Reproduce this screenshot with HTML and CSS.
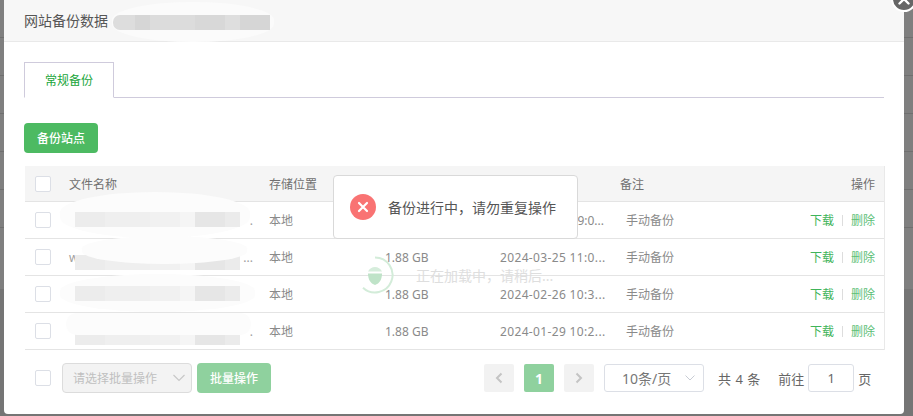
FILE: index.html
```html
<!DOCTYPE html>
<html lang="zh-CN">
<head>
<meta charset="utf-8">
<title>网站备份数据</title>
<link rel="stylesheet" href="styles.css">
</head>
<body>
<div class="dialog">
  <button class="close" aria-label="关闭"><svg width="14" height="14" viewBox="0 0 14 14"><path d="M2.5 2.5l9 9M11.5 2.5l-9 9" stroke="#fff" stroke-width="2.4" stroke-linecap="round"/></svg></button>
  <header class="head">
    <span>网站备份数据</span>
    <i class="smear smear-head"></i>
    <i class="mosaic mosaic-head"></i>
  </header>
  <main class="content">
    <div class="tabs"><div class="tab">常规备份</div></div>
    <button class="primary">备份站点</button>
    <section class="table">
      <div class="row row-head">
        <span class="check"></span><span>文件名称</span><span>存储位置</span><span></span><span></span><span>备注</span><span class="ops">操作</span>
      </div>
      <div class="row">
        <span class="check"></span><span class="name"><b>.</b><b>.</b></span><span>本地</span><span></span><span class="cut">9:0...</span><span class="note">手动备份</span><span class="ops"><a>下载</a><s></s><a class="del">删除</a></span>
      </div>
      <div class="row">
        <span class="check"></span><span class="name"><b>w</b><b>...</b></span><span>本地</span><span>1.88 GB</span><span class="date">2024-03-25 11:0...</span><span class="note">手动备份</span><span class="ops"><a>下载</a><s></s><a class="del">删除</a></span>
      </div>
      <div class="row">
        <span class="check"></span><span class="name"><b></b><b></b></span><span>本地</span><span>1.88 GB</span><span class="date">2024-02-26 10:3...</span><span class="note">手动备份</span><span class="ops"><a>下载</a><s></s><a class="del">删除</a></span>
      </div>
      <div class="row">
        <span class="check"></span><span class="name"><b></b><b>.</b></span><span>本地</span><span>1.88 GB</span><span class="date">2024-01-29 10:2...</span><span class="note">手动备份</span><span class="ops"><a>下载</a><s></s><a class="del">删除</a></span>
      </div>
      <i class="smear smear-1"></i><i class="mosaic mosaic-1"></i>
      <i class="mosaic mosaic-2"></i><i class="smear smear-2"></i>
      <i class="smear smear-3"></i><i class="mosaic mosaic-3"></i>
      <i class="mosaic mosaic-4"></i><i class="smear smear-4"></i>
      <div class="loading">
        <svg width="40" height="40" viewBox="0 0 40 40"><path d="M20 2.5A17.5 17.5 0 1 1 8 32.7" fill="none" stroke="#d3ecd9" stroke-width="2"/><path d="M13 18.5h14c0 6-2.500 10-7 11.500-4.500-1.500-7-5.500-7-11.500z" fill="#bfe3c8"/><path d="M13 16.500c1.500-3 4-4.500 7-4.500s5.500 1.500 7 4.500z" fill="#d6eddc"/></svg>
        <span>正在加载中，请稍后...</span>
      </div>
      <div class="toast">
        <svg width="26" height="26" viewBox="0 0 26 26"><circle cx="13" cy="13" r="13" fill="#f97373"/><path d="M9 9l8 8M17 9l-8 8" stroke="#fff" stroke-width="2.200" stroke-linecap="round"/></svg>
        <span>备份进行中，请勿重复操作</span>
      </div>
    </section>
    <footer class="foot">
      <span class="check"></span>
      <div class="batch">请选择批量操作<svg width="14" height="8" viewBox="0 0 14 8"><path d="M1.500 1l5.500 5.500L12.500 1" fill="none" stroke="#c8c8c8" stroke-width="1.200"/></svg></div>
      <button class="primary muted">批量操作</button>
      <nav class="pager">
        <span class="pg"><svg width="8" height="12" viewBox="0 0 8 12"><path d="M6.500 1.500L2 6l4.500 4.500" fill="none" stroke="#c4c4c4" stroke-width="2"/></svg></span>
        <span class="pg on">1</span>
        <span class="pg"><svg width="8" height="12" viewBox="0 0 8 12"><path d="M1.500 1.500L6 6l-4.500 4.500" fill="none" stroke="#c4c4c4" stroke-width="2"/></svg></span>
        <div class="size">10条/页<svg width="10" height="6" viewBox="0 0 10 6"><path d="M.5.500L5 5 9.500.5" fill="none" stroke="#c8ccd4"/></svg></div>
        <span class="total">共 4 条</span>
        <span class="goto">前往</span>
        <span class="num">1</span>
        <span class="unit">页</span>
      </nav>
    </footer>
  </main>
</div>
</body>
</html>
```
FILE: styles.css
```css
* { box-sizing: border-box; }
html, body { height: 100%; }
body {
  margin: 0;
  overflow: hidden;
  font-family: "Noto Sans", "Noto Sans CJK SC", sans-serif;
  font-size: 12px;
  color: #666;
  background:
    linear-gradient(#7f7f7f 0 289px, #757575 289px),
    #7f7f7f;
}
body::before {
  content: "";
  position: absolute;
  inset: 0 0 187px 0;
  background: repeating-linear-gradient(#0000 0 37px, #6f6f6f 37px 38px);
}
i, b, s { font-style: normal; font-weight: 400; text-decoration: none; }
.dialog {
  position: relative;
  width: 900px;
  height: 414px;
  margin-left: 4px;
  background: #fff;
  border-radius: 0 0 4px 4px;
  display: flex;
  flex-direction: column;
}
.close {
  position: absolute;
  top: -14px;
  right: -13px;
  width: 26px;
  height: 26px;
  padding: 0;
  border: 2px solid #fff;
  border-radius: 50%;
  background: #666;
  display: flex;
  align-items: center;
  justify-content: center;
  z-index: 5;
}
.head {
  position: relative;
  height: 42px;
  flex: none;
  padding: 11px 0 0 20px;
  font-size: 14px;
  line-height: 20px;
  color: #555;
  background: #f7f7f7;
  border-bottom: 1px solid #e9e9e9;
}
.content { flex: 1; padding: 20px 20px 0; display: flex; flex-direction: column; }
.tabs { height: 36px; border-bottom: 1px solid #cfcbdc; flex: none; }
.tab {
  width: 90px;
  height: 36px;
  border: 1px solid #cfcbdc;
  border-bottom-color: #fff;
  background: #fff;
  color: #20a53a;
  line-height: 35px;
  text-align: center;
}
.primary {
  align-self: flex-start;
  width: 74px;
  height: 30px;
  margin-top: 25px;
  border: 0;
  padding: 0;
  border-radius: 4px;
  font: 500 12px "Noto Sans", "Noto Sans CJK SC", sans-serif;
  color: #fff;
  background: #4dba62;
}
.table {
  position: relative;
  margin: 13px 0 0 1px;
  width: 860px;
  border-right: 1px solid #e9e9e9;
  flex: none;
}
.row {
  display: grid;
  grid-template-columns: 44px 200px 116px 115px 120px 1fr 90px;
  align-items: center;
  height: 37px;
  border-bottom: 1px solid #e4e4e4;
  color: #8a8a8a;
}
.row-head { height: 36px; background: #f5f5f5; color: #707070; }
.check {
  display: block;
  width: 16px;
  height: 16px;
  margin-left: 10px;
  background: #fff;
  border: 1px solid #dcdfe6;
  border-radius: 2px;
}
.name { display: flex; justify-content: space-between; padding-right: 16px; color: #a0a0a0; }
.cut { text-align: right; padding-right: 16px; }
.date { letter-spacing: .35px; white-space: nowrap; }
.note { padding-left: 6px; }
.ops { text-align: right; padding-right: 9px; display: flex; justify-content: flex-end; align-items: center; }
.ops a { color: #3fb45a; }
.ops a.del { color: #5cc076; }
.ops s { width: 1px; height: 11px; margin: 0 8px; background: #ddd; }
.smear, .mosaic { position: absolute; display: block; }
.smear { background: #fcfcfc; border-radius: 50%/45%; }
.mosaic {
  background: linear-gradient(90deg, #ececec 0 30px, #efefef 30px 75px, #f1f1f1 75px 105px, #f5f5f5 105px 120px, #e6e6e6 120px 150px, #ebebeb 150px);
}
.smear-head { left: 108px; top: 2px; width: 162px; height: 40px; background: #fbfbfb; }
.mosaic-head {
  left: 109px; top: 15px; width: 157px; height: 15px;
  border-radius: 7px 0 0 7px;
  background: linear-gradient(90deg, #ddd 0 22px, #d6d6d6 22px 37px, #dcdcdc 37px 82px, #d8d8d8 82px 112px, #dedede 112px 127px, #d6d6d6 127px);
}
.smear-1 { left: 35px; top: 26px; width: 190px; height: 46px; }
.mosaic-1 { left: 50px; top: 46px; width: 165px; height: 15px; }
.smear-2 { left: 57px; top: 70px; width: 165px; height: 28px; }
.mosaic-2 { left: 50px; top: 89px; width: 165px; height: 15px; }
.smear-3 { left: 35px; top: 108px; width: 195px; height: 38px; }
.mosaic-3 { left: 50px; top: 120px; width: 165px; height: 15px; }
.smear-4 { left: 41px; top: 147px; width: 185px; height: 22px; border-radius: 11px; }
.mosaic-4 { left: 50px; top: 164px; width: 165px; height: 15px; }
.loading {
  position: absolute;
  left: 330px;
  top: 89px;
  display: flex;
  align-items: center;
  gap: 21px;
  font-size: 14px;
  color: #dedede;
}
.toast {
  position: absolute;
  left: 308px;
  top: 9px;
  width: 245px;
  height: 64px;
  padding-left: 16px;
  display: flex;
  align-items: center;
  gap: 12px;
  background: #fff;
  border: 1px solid #d9d9d9;
  border-radius: 4px;
  font-size: 14px;
  color: #555;
}
.foot { display: flex; align-items: center; height: 56px; margin-left: 1px; }
.foot .primary { align-self: center; margin: 0 0 0 5px; }
.muted { background: #8fd19e; }
.batch {
  width: 130px;
  height: 30px;
  margin-left: 11px;
  padding: 0 5px 0 10px;
  display: flex;
  align-items: center;
  justify-content: space-between;
  background: #f3f3f3;
  border: 1px solid #dcdcdc;
  border-radius: 4px;
  color: #c0c0c0;
}
.pager { display: flex; align-items: center; margin-left: 213px; font-size: 13px; color: #666; }
.pg {
  width: 30px;
  height: 28px;
  margin-right: 10px;
  display: flex;
  align-items: center;
  justify-content: center;
  background: #f2f2f2;
  border-radius: 2px;
}
.pg.on { background: #8fd19e; color: #fff; font-weight: 700; font-size: 14px; }
.size {
  width: 100px;
  height: 28px;
  padding: 0 8px 0 17px;
  display: flex;
  align-items: center;
  justify-content: space-between;
  border: 1px solid #dcdfe6;
  border-radius: 3px;
  font-size: 14px;
  color: #777;
}
.total { margin-left: 14px; white-space: nowrap; word-spacing: 1px; }
.goto { margin-left: 18px; }
.num {
  width: 46px;
  height: 28px;
  margin-left: 4px;
  border: 1px solid #dcdfe6;
  border-radius: 3px;
  line-height: 26px;
  text-align: center;
}
.unit { margin-left: 4px; }
```
